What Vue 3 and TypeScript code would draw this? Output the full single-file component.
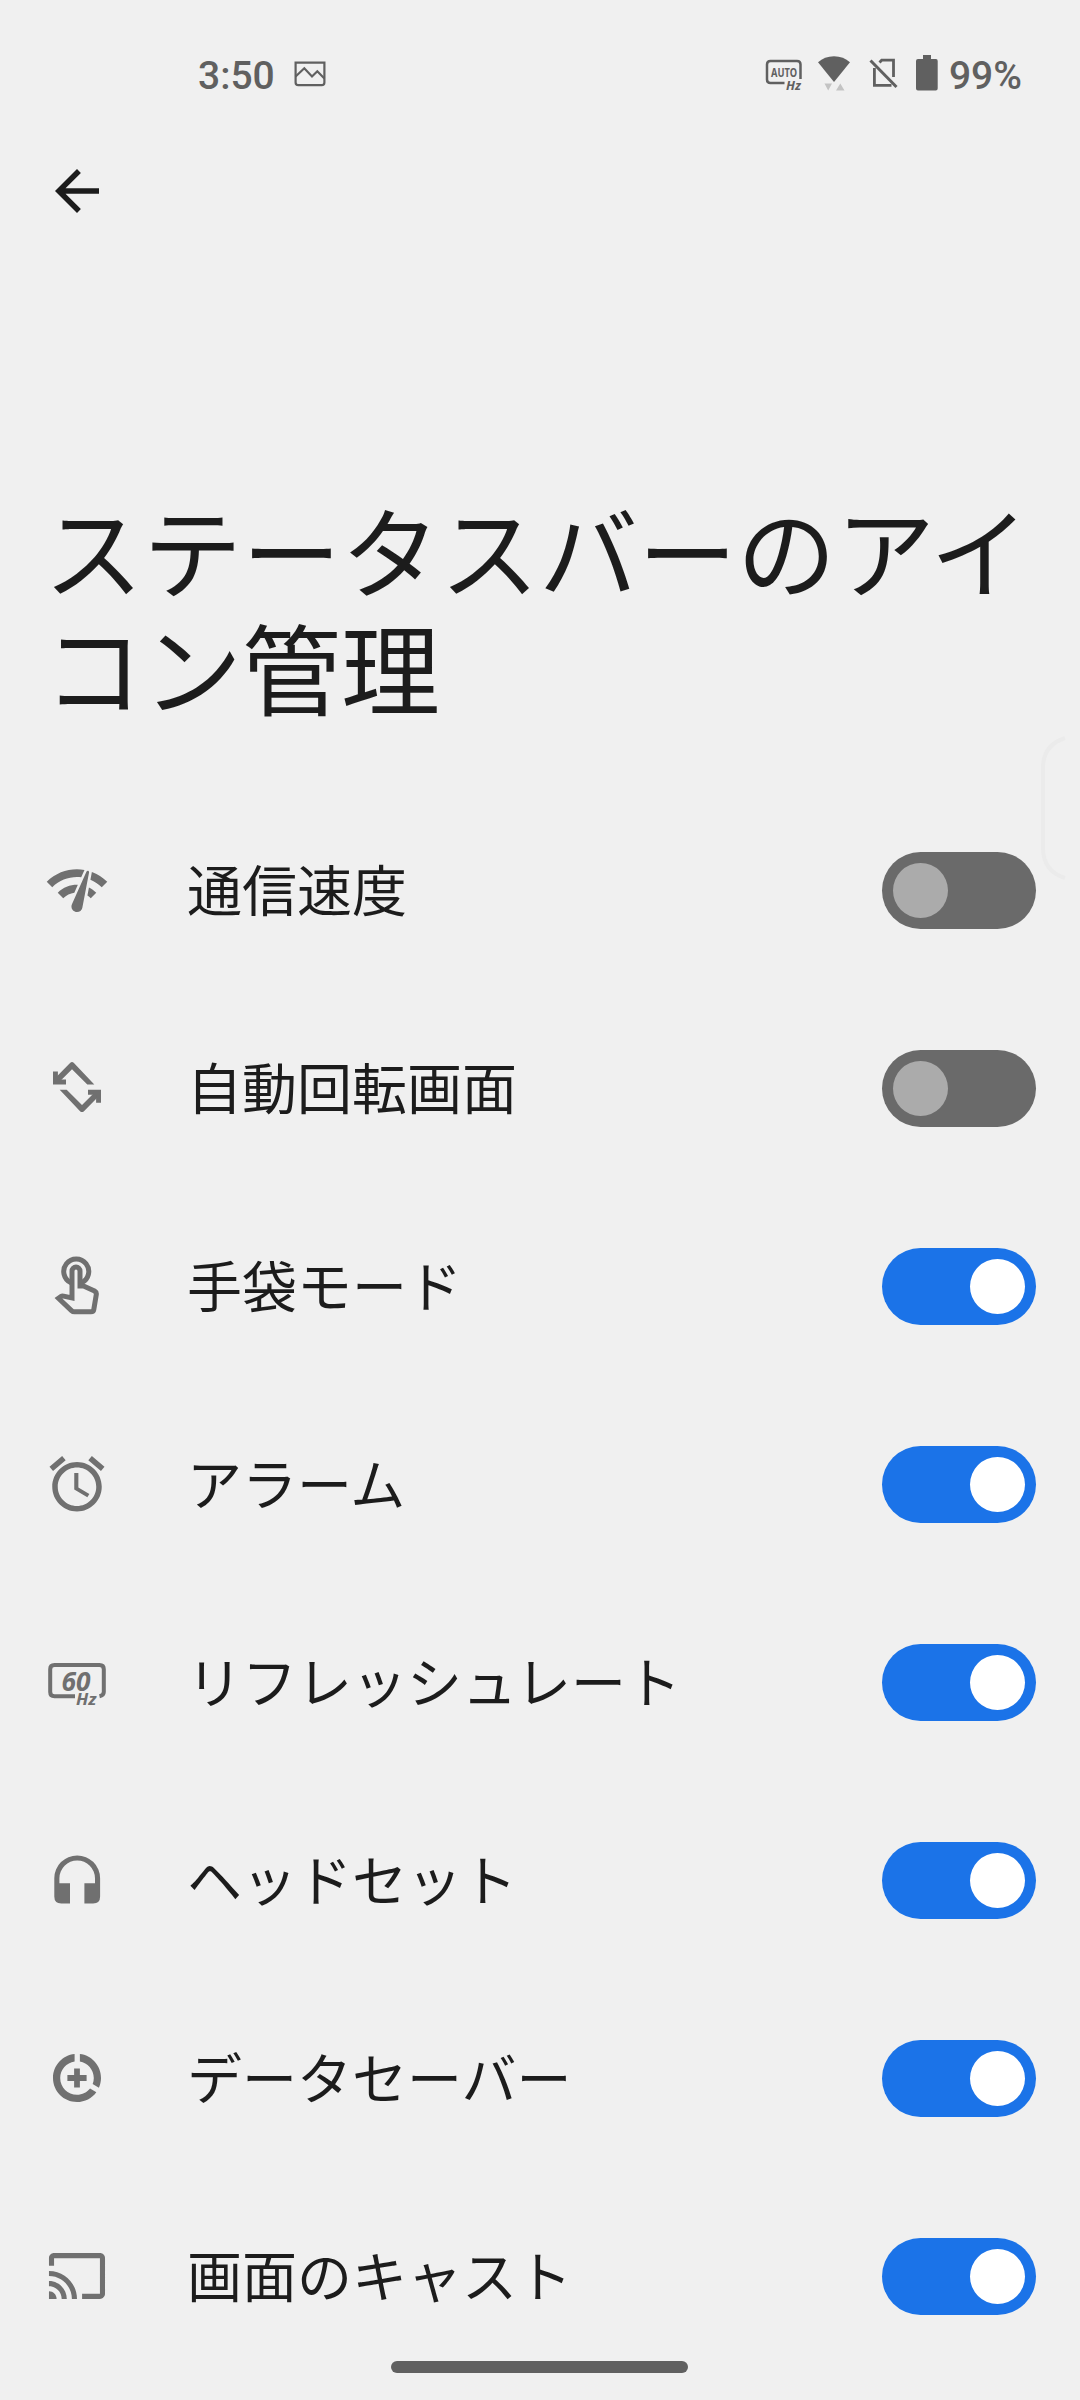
<script setup lang="ts">
import { ref } from 'vue'

type IconName = 'speed' | 'rotate' | 'glove' | 'alarm' | 'refresh' | 'headset' | 'saver' | 'cast'

interface Setting {
  icon: IconName
  label: string
  on: boolean
}

const settings = ref<Setting[]>([
  { icon: 'speed', label: '通信速度', on: false },
  { icon: 'rotate', label: '自動回転画面', on: false },
  { icon: 'glove', label: '手袋モード', on: true },
  { icon: 'alarm', label: 'アラーム', on: true },
  { icon: 'refresh', label: 'リフレッシュレート', on: true },
  { icon: 'headset', label: 'ヘッドセット', on: true },
  { icon: 'saver', label: 'データセーバー', on: true },
  { icon: 'cast', label: '画面のキャスト', on: true },
])
</script>

<template>
  <div class="screen">
    <header class="status">
      <div class="status-left">
        <span class="clock">3:50</span>
        <svg class="picture" width="32" height="26" viewBox="0 0 32 26" fill="none" stroke="#606060" stroke-width="2.2">
          <path d="M1.6 1.6H30.4V21.5Q30.4 24.2 27.7 24.2H4.3Q1.6 24.2 1.6 21.5Z" />
          <path d="M1.6 15.5L10.3 7.3L18 15.5L23.3 10.3L30.4 17.5" />
        </svg>
      </div>
      <div class="status-right">
        <svg class="auto-hz" width="38" height="34" viewBox="0 0 38 34">
          <path d="M19.5 24H5.5Q2 24 2 20.500V5.500Q2 2 5.500 2H32Q35.500 2 35.500 5.500V20" fill="none" stroke="#606060" stroke-width="2.500" />
          <text x="6" y="17.500" font-size="12.500" font-weight="700" textLength="26" lengthAdjust="spacingAndGlyphs">AUTO</text>
          <text x="21" y="31" font-size="12.500" font-weight="700" font-style="italic" textLength="15" lengthAdjust="spacingAndGlyphs">Hz</text>
        </svg>
        <svg class="wifi" width="34" height="36" viewBox="0 0 34 36">
          <path d="M17 27L1 7.300Q7.500 1.200 17 1.200T33 7.300Z" fill="#606060" />
          <path d="M7.500 28.500H15L11.200 35.500ZM19 35.500L23.300 28.500L27.500 35.500Z" fill="#c3c3c3" />
        </svg>
        <svg class="sim" width="30" height="32" viewBox="0 0 30 32" fill="none" stroke="#606060" stroke-width="2.800">
          <path d="M1.500 2.500L27.500 29" stroke-width="3" />
          <path d="M10.500 4.500L12.700 2.200H24.500V19" />
          <path d="M5.400 10V27.400H22.500" />
        </svg>
        <svg class="battery" width="22" height="36" viewBox="0 0 22 36">
          <path d="M7 0H15V4H20Q21.700 4 21.700 6V33.500Q21.700 35.500 19.700 35.500H2Q0 35.500 0 33.500V6Q0 4 2 4H7Z" fill="#606060" />
        </svg>
        <span class="percent">99%</span>
      </div>
    </header>

    <nav class="toolbar">
      <svg class="back" width="66" height="66" viewBox="0 0 24 24">
        <path d="M20 11H7.830l5.590-5.590L12 4l-8 8 8 8 1.410-1.410L7.830 13H20v-2z" fill="#1c1c1c" />
      </svg>
    </nav>

    <h1 class="title">ステータスバーのアイ<br />コン管理</h1>

    <main class="list">
      <div v-for="item in settings" :key="item.icon" class="row" @click="item.on = !item.on">
        <svg v-if="item.icon === 'speed'" class="icon" viewBox="0 0 24 24">
          <path d="M15.9 5c-.17 0-.32.09-.41.23l-.07.15-5.18 11.65c-.16.29-.26.61-.26.96 0 1.11.9 2.01 2.01 2.01.96 0 1.77-.68 1.96-1.59l.01-.03L16.4 5.5c0-.28-.22-.5-.5-.5zM1 9l2 2c2.88-2.88 6.79-4.08 10.53-3.62l1.19-2.68C9.89 3.840 4.740 5.270 1 9zm20 2l2-2c-1.640-1.640-3.550-2.820-5.590-3.570l-.53 2.820c1.500.620 2.900 1.530 4.120 2.750zm-4 4l2-2c-.8-.8-1.700-1.420-2.660-1.890l-.55 2.920c.42.270.83.590 1.210.970zM5 13l2 2c1.130-1.130 2.560-1.790 4.030-2l1.280-2.880c-2.630-.08-5.300.870-7.310 2.880z" />
        </svg>
        <svg v-else-if="item.icon === 'rotate'" class="icon" viewBox="0 0 66 66">
          <g v-for="angle in [0, 180]" :key="angle" :transform="`rotate(${angle} 33 32.1)`">
            <path d="M50.300 29.500H43.300L28 14.300L15 27.300L10.800 23.500L26.300 7.800Q28 6.400 29.700 7.800Z" />
            <path d="M9 16.500H13.900V24.500H22V29.500H9Z" />
          </g>
        </svg>
        <svg v-else-if="item.icon === 'glove'" class="icon line" viewBox="0 0 66 66">
          <path d="M27 29.800A12.500 12.500 0 1 1 37.500 29.800" />
          <path d="M28 45V18A4 4 0 0 1 36 18V33H39.500L50.500 38Q52.700 39.300 52.300 41.500L49.800 56.500Q49.400 58.800 47 58.800H30.500Q28.800 58.800 27.500 57.600L14.500 45.200L17.200 43.300Q18 42.800 19.500 43.100Z" />
        </svg>
        <svg v-else-if="item.icon === 'alarm'" class="icon" viewBox="0 0 24 24">
          <path d="M22 5.720l-4.600-3.860-1.290 1.530 4.600 3.860L22 5.720zM7.880 3.390L6.600 1.860 2 5.710l1.290 1.530 4.590-3.850zM12.500 8H11v6l4.750 2.850.75-1.230-4-2.370V8zM12 4c-4.970 0-9 4.030-9 9s4.020 9 9 9c4.970 0 9-4.030 9-9s-4.030-9-9-9zm0 16c-3.870 0-7-3.130-7-7s3.130-7 7-7 7 3.130 7 7-3.130 7-7 7z" />
        </svg>
        <svg v-else-if="item.icon === 'refresh'" class="icon" viewBox="0 0 66 66">
          <path d="M31 47.200H10.500Q6.200 47.200 6.200 43V20.300Q6.200 16.100 10.500 16.100H55.500Q59.800 16.100 59.800 20.300V43Q59.800 46.300 55.500 47.200" fill="none" stroke="#707070" stroke-width="4" />
          <text x="17.500" y="41.500" font-size="26" textLength="29" lengthAdjust="spacingAndGlyphs">60</text>
          <text x="32" y="55.500" font-size="15.500" textLength="20.500" lengthAdjust="spacingAndGlyphs">Hz</text>
        </svg>
        <svg v-else-if="item.icon === 'headset'" class="icon" viewBox="0 0 66 66">
          <path d="M10.300 31.300A22.900 22.900 0 0 1 56.100 31.300V49.500Q56.100 56.500 49.100 56.500H40.400V36.200H51V31.300A17.800 17.800 0 0 0 15.400 31.300V36.200H26V56.500H17.300Q10.300 56.500 10.300 49.500Z" />
        </svg>
        <svg v-else-if="item.icon === 'saver'" class="icon" viewBox="-1.750 -1.750 27.500 27.500">
          <path d="M13.200 2.050v3.030c3.190.490 5.800 3.390 5.800 6.920 0 .9-.18 1.750-.48 2.540l2.600 1.530c.56-1.240.88-2.620.88-4.070 0-5.180-3.950-9.450-8.800-9.950zM12 19c-3.870 0-7-3.130-7-7 0-3.530 2.610-6.430 6-6.920V2.050c-5.060.5-9 4.760-9 9.950 0 5.520 4.470 10 9.990 10 3.310 0 6.240-1.610 8.060-4.090l-2.600-1.530C16.170 17.980 14.210 19 12 19z" />
          <path d="M13.200 8h-2.400v2.800H8v2.400h2.800V16h2.400v-2.800H16v-2.400h-2.800V8z" />
        </svg>
        <svg v-else class="icon" viewBox="-0.950 -0.950 25.900 25.900">
          <path d="M21 3H3c-1.100 0-2 .9-2 2v3h2V5h18v14h-7v2h7c1.100 0 2-.9 2-2V5c0-1.100-.9-2-2-2zM1 18v3h3c0-1.660-1.340-3-3-3zm0-4v2c2.760 0 5 2.240 5 5h2c0-3.870-3.130-7-7-7zm0-4v2c4.970 0 9 4.030 9 9h2c0-6.080-4.930-11-11-11z" />
        </svg>
        <span class="label">{{ item.label }}</span>
        <span class="switch" :class="{ on: item.on }"><span class="thumb"></span></span>
      </div>
    </main>

    <svg class="edge-handle" width="26" height="144" viewBox="0 0 26 144">
      <path d="M24 2Q2 9 2 32V112Q2 135 24 142" fill="none" stroke="#ebebeb" stroke-width="4" />
    </svg>
    <div class="home-bar"></div>
  </div>
</template>

<style>
body {
  margin: 0;
  background: #f0f0f0;
}
</style>

<style scoped>
.screen {
  position: relative;
  width: 1080px;
  height: 2400px;
  overflow: hidden;
  background: #f0f0f0;
  color: #1c1c1c;
  font-family: "Noto Sans CJK JP", sans-serif;
}

.status {
  display: flex;
  justify-content: space-between;
  box-sizing: border-box;
  height: 150px;
  padding: 53px 58px 0 198px;
  color: #606060;
  font: 500 39px/46px Roboto, sans-serif;
}

.status-left,
.status-right {
  display: flex;
  align-items: flex-start;
}

.picture {
  margin: 8px 0 0 19px;
}

.auto-hz {
  margin: 6px 14px 0 0;
  overflow: visible;
  fill: #606060;
  font-family: "Noto Sans", sans-serif;
}

.wifi {
  margin: 2px 18px 0 0;
}

.sim {
  margin: 5px 17px 0 0;
}

.battery {
  margin: 2px 11px 0 0;
}

.toolbar {
  display: flex;
  height: 340px;
  padding: 8px 44px 0;
  box-sizing: border-box;
}

.title {
  height: 301px;
  margin: 0;
  padding-left: 44px;
  box-sizing: border-box;
  font-size: 99px;
  font-weight: 400;
  line-height: 117px;
  white-space: nowrap;
}

.row {
  display: flex;
  align-items: center;
  box-sizing: border-box;
  height: 198px;
  padding: 1px 44px 0;
}

.icon {
  flex: none;
  width: 66px;
  height: 66px;
  margin-bottom: 1px;
  fill: #707070;
  font-family: "Noto Sans", sans-serif;
  font-style: italic;
  font-weight: 700;
}

.icon.line {
  fill: none;
  stroke: #707070;
  stroke-width: 5;
}

.label {
  flex: 1;
  margin: 0 0 7px 77px;
  font-size: 55px;
  line-height: 80px;
  white-space: nowrap;
}

.switch {
  display: flex;
  flex: none;
  box-sizing: border-box;
  width: 154px;
  height: 77px;
  padding: 11px;
  border-radius: 39px;
  background: #6a6a6a;
}

.thumb {
  width: 55px;
  height: 55px;
  border-radius: 50%;
  background: #ababab;
}

.switch.on {
  justify-content: flex-end;
  background: #1b73e8;
}

.switch.on .thumb {
  background: #fff;
}

.edge-handle {
  position: absolute;
  top: 736px;
  left: 1041px;
}

.home-bar {
  position: absolute;
  bottom: 27px;
  left: 391px;
  width: 297px;
  height: 12px;
  border-radius: 6px;
  background: #606060;
}
</style>
